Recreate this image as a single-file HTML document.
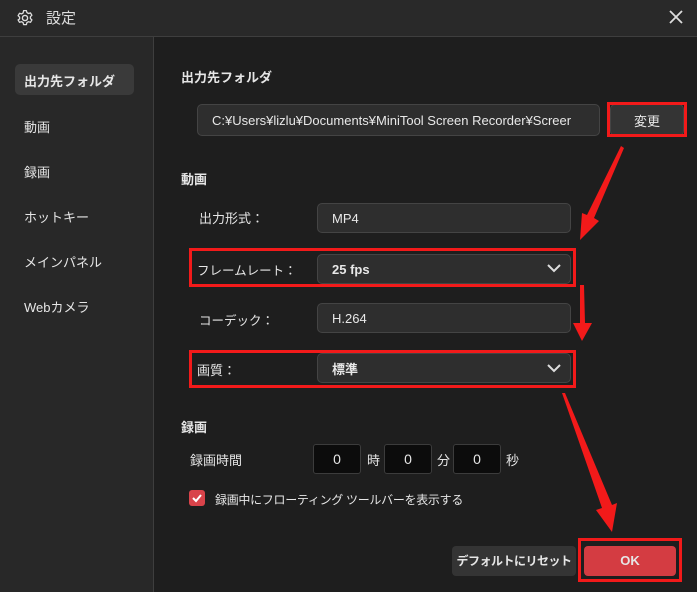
<!DOCTYPE html><html><head><meta charset="utf-8"><style>
html,body{margin:0;width:697px;height:592px;overflow:hidden}
body{background:#1e1e1e;font-family:"Liberation Sans","Noto Sans CJK JP",sans-serif;color:#e6e6e6;position:relative}
.a{position:absolute;white-space:nowrap}
.t{font-size:13px;line-height:16px}
.b{font-weight:bold}
.box{position:absolute;background:#2e2e2e;border:1px solid #444;border-radius:5px;box-sizing:border-box;font-size:13px;color:#e8e8e8;padding-left:14px;display:flex;align-items:center;white-space:nowrap}
.red{position:absolute;border:3px solid #f21a1a;box-sizing:border-box}
.num{position:absolute;background:#0c0c0c;border:1px solid #3c3c3c;border-radius:3px;box-sizing:border-box;width:48px;height:30px;font-size:14px;text-align:center;line-height:28px}
</style></head><body>
<div class="a" style="left:0;top:0;width:697px;height:36px;background:#292929;border-bottom:1px solid #3e3e3e"></div>
<svg class="a" style="left:16px;top:9px" width="18" height="18" viewBox="0 0 18 18"><circle cx="9" cy="9" r="2.6" fill="none" stroke="#ddd" stroke-width="1.4"/><path d="M7.6 1.6h2.8l.5 2 1.6.9 2-.6 1.4 2.4-1.5 1.4v1.8l1.5 1.4-1.4 2.4-2-.6-1.6.9-.5 2H7.6l-.5-2-1.6-.9-2 .6-1.4-2.4L3.6 9.9V8.1L2.1 6.7l1.4-2.4 2 .6 1.6-.9z" fill="none" stroke="#ddd" stroke-width="1.3" stroke-linejoin="round"/></svg>
<div class="a" style="left:46px;top:10px;font-size:15px;line-height:18px;color:#ddd">設定</div>
<svg class="a" style="left:668px;top:9px" width="16" height="16"><path d="M2 2L14 14M14 2L2 14" stroke="#ddd" stroke-width="1.8"/></svg>
<div class="a" style="left:0;top:37px;width:153px;height:555px;background:#282828;border-right:1px solid #3e3e3e"></div>
<div class="a" style="left:15px;top:64px;width:119px;height:31px;background:#3a3a3a;border-radius:5px"></div>
<div class="a t b" style="left:24px;top:74px">出力先フォルダ</div>
<div class="a t" style="left:24px;top:120px">動画</div>
<div class="a t" style="left:24px;top:165px">録画</div>
<div class="a t" style="left:24px;top:210px">ホットキー</div>
<div class="a t" style="left:24px;top:255px">メインパネル</div>
<div class="a t" style="left:24px;top:300px">Webカメラ</div>
<div class="a t b" style="left:181px;top:70px">出力先フォルダ</div>
<div class="box" style="left:197px;top:104px;width:403px;height:32px;overflow:hidden">C:¥Users¥lizlu¥Documents¥MiniTool Screen Recorder¥Screer</div>
<div class="box" style="left:610px;top:104px;width:74px;height:32px;justify-content:center;padding:0;background:#343434">変更</div>
<div class="red" style="left:607px;top:102px;width:80px;height:35px"></div>
<div class="a t b" style="left:181px;top:172px">動画</div>
<div class="a t" style="left:199px;top:211px">出力形式：</div>
<div class="box" style="left:317px;top:203px;width:254px;height:30px">MP4</div>
<div class="a t" style="left:197px;top:263px;font-size:12.5px">フレームレート：</div>
<div class="box b" style="left:317px;top:254px;width:254px;height:30px">25 fps</div>
<div class="red" style="left:189px;top:248px;width:387px;height:39px"></div>
<div class="a t" style="left:199px;top:313px;font-size:12.5px">コーデック：</div>
<div class="box" style="left:317px;top:303px;width:254px;height:30px">H.264</div>
<div class="a t" style="left:197px;top:363px">画質：</div>
<div class="box b" style="left:317px;top:353px;width:254px;height:30px">標準</div>
<div class="red" style="left:189px;top:350px;width:387px;height:38px"></div>
<svg class="a" style="left:546px;top:262px" width="16" height="12"><path d="M2 3l6 6 6-6" fill="none" stroke="#ddd" stroke-width="2"/></svg>
<div class="a t b" style="left:181px;top:420px">録画</div>
<svg class="a" style="left:546px;top:362px" width="16" height="12"><path d="M2 3l6 6 6-6" fill="none" stroke="#ddd" stroke-width="2"/></svg>
<div class="a t" style="left:190px;top:453px">録画時間</div>
<div class="num" style="left:313px;top:444px">0</div><div class="a t" style="left:367px;top:453px">時</div>
<div class="num" style="left:384px;top:444px">0</div><div class="a t" style="left:437px;top:453px">分</div>
<div class="num" style="left:453px;top:444px">0</div><div class="a t" style="left:506px;top:453px">秒</div>
<div class="a" style="left:189px;top:490px;width:16px;height:16px;background:#d9434a;border-radius:3px"></div>
<svg class="a" style="left:189px;top:490px" width="16" height="16"><path d="M4 8l3 3 5-6" fill="none" stroke="#fff" stroke-width="2"/></svg>
<div class="a t" style="left:215px;top:492px;font-size:12px;letter-spacing:-0.3px">録画中にフローティング ツールバーを表示する</div>
<div class="a t b" style="left:452px;top:546px;width:124px;height:30px;background:#343434;border-radius:4px;text-align:center;line-height:30px;font-size:12px;letter-spacing:-0.5px">デフォルトにリセット</div>
<div class="a t b" style="left:584px;top:546px;width:92px;height:30px;background:#d43c42;border-radius:4px;text-align:center;line-height:30px">OK</div>
<div class="red" style="left:578px;top:538px;width:104px;height:44px"></div>
<svg class="a" style="left:0;top:0" width="697" height="592">
<g fill="#f21a1a">
<path d="M621 146 L624 148 L594 218 L599 221 L580 240 L582 213 L587 215 Z"/>
<path d="M580 285 L584 285 L585 323 L592 323 L582 341 L573 323 L580 323 Z"/>
<path d="M562 393 L565 393 L612 505 L617 503 L612 532 L596 510 L602 508 Z"/>
</g></svg>
</body></html>
